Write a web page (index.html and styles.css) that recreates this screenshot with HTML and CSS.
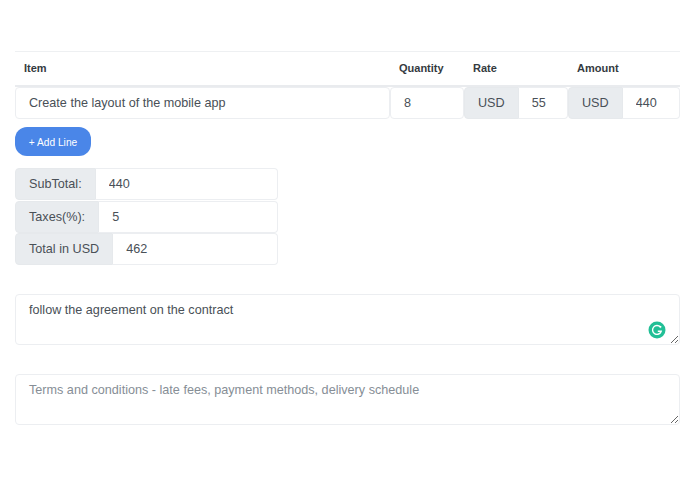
FILE: index.html
```html
<!DOCTYPE html>
<html lang="en">
  <head>
    <meta charset="UTF-8" />
    <title>Invoice</title>
    <link rel="stylesheet" href="styles.css">
  </head>
  <body>
    <div class="invoice">
      <div class="line-grid line-head">
        <div class="head-cell">Item</div>
        <div class="head-cell">Quantity</div>
        <div class="head-cell">Rate</div>
        <div class="head-cell">Amount</div>
      </div>
      <div class="line-grid">
        <input class="field" type="text" value="Create the layout of the mobile app">
        <input class="field" type="text" value="8">
        <div class="group">
          <span class="addon">USD</span>
          <input class="field" type="text" value="55">
        </div>
        <div class="group">
          <span class="addon">USD</span>
          <input class="field" type="text" value="440">
        </div>
      </div>
      <button class="add-btn" type="button">+ Add Line</button>
      <div class="totals">
        <div class="group">
          <span class="addon">SubTotal:</span>
          <input class="field" type="text" value="440">
        </div>
        <div class="group">
          <span class="addon">Taxes(%):</span>
          <input class="field" type="text" value="5">
        </div>
        <div class="group">
          <span class="addon">Total in USD</span>
          <input class="field" type="text" value="462">
        </div>
      </div>
      <div class="note-wrap">
        <textarea class="note">follow the agreement on the contract</textarea>
        <svg class="grammarly" viewBox="0 0 18 18" width="18" height="18">
          <circle cx="9" cy="9" r="8.5" fill="#22bf96"/>
          <path d="M12.4 6.2A4.4 4.4 0 1 0 13.2 10.2H9.8" fill="none" stroke="#fff" stroke-width="1.4"/>
          <path d="M11 4.8l2.4 0.2-0.4 2.4z" fill="#fff"/>
        </svg>
      </div>
      <div class="note-wrap">
        <textarea class="note" placeholder="Terms and conditions - late fees, payment methods, delivery schedule"></textarea>
      </div>
    </div>
  </body>
</html>
```

FILE: styles.css
```css
* {
  box-sizing: border-box;
}

body {
  margin: 0;
  background: #fff;
  font-family: "Liberation Sans", Arial, sans-serif;
  color: #495057;
}

.invoice {
  padding: 51px 15px 0;
}

.line-grid {
  display: grid;
  grid-template-columns: 375px 74px 104px 112px;
}
.line-head {
  height: 36px;
  border-top: 1px solid #eef0f2;
  border-bottom: 2px solid #e9ebee;
}
.head-cell {
  padding: 10px 9px 0;
  font-size: 11px;
  font-weight: bold;
  color: #343a40;
}

.field {
  display: block;
  width: 100%;
  min-width: 0;
  height: 32px;
  padding: 0 13px;
  border: 1px solid #eceef1;
  border-radius: 4px;
  background: #fff;
  font-family: inherit;
  font-size: 12.63px;
  color: #495057;
  outline: none;
}

.group {
  display: flex;
  height: 32px;
}
.group .field {
  flex: 1;
  border-left: 0;
  border-radius: 0 4px 4px 0;
}
.addon {
  display: flex;
  align-items: center;
  padding: 0 13px;
  background: #e9ecef;
  border: 1px solid #e6e9ec;
  border-radius: 4px 0 0 4px;
  font-size: 12.63px;
  white-space: nowrap;
}

.add-btn {
  display: block;
  width: 76px;
  height: 29px;
  margin-top: 8px;
  padding: 1px 0 0;
  border: 0;
  border-radius: 12px;
  background: #4a86e8;
  color: #fff;
  font-family: inherit;
  font-size: 10.2px;
}

.totals {
  width: 263px;
  margin-top: 12px;
  display: flex;
  flex-direction: column;
  gap: 0.5px;
}

.note-wrap {
  position: relative;
  margin-top: 29px;
  height: 51px;
}
.note {
  display: block;
  width: 100%;
  height: 51px;
  padding: 8px 13px;
  border: 1px solid #eceef1;
  border-radius: 4px;
  font-family: inherit;
  font-size: 12.63px;
  color: #495057;
  outline: none;
}
.note::placeholder {
  color: #868e96;
}
.grammarly {
  position: absolute;
  right: 14px;
  top: 27px;
}
```
